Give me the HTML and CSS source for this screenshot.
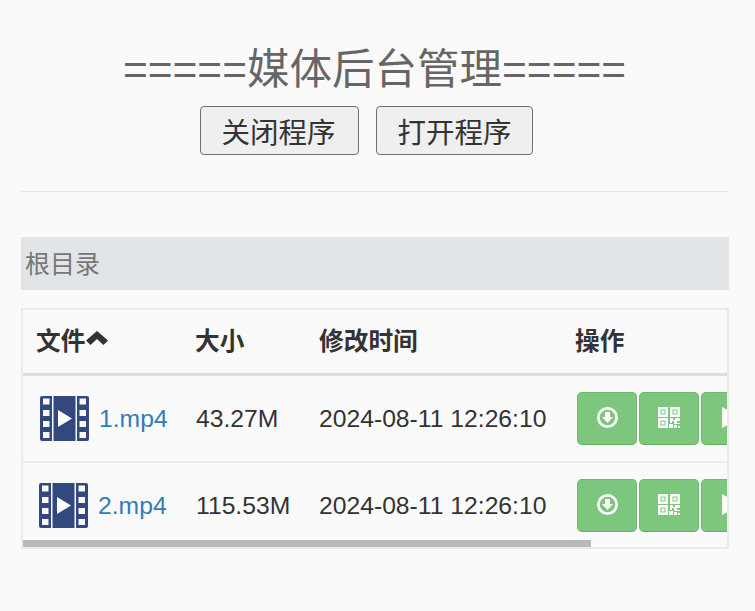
FILE: index.html

```html
<!DOCTYPE html>
<html>
  <head>
    <meta charset="UTF-8">
    <title>媒体后台管理</title>
    <link rel="stylesheet" href="styles.css">
  </head>
  <body>
    <svg class="defs" width="0" height="0">
      <symbol id="film" viewBox="0 0 49 45">
        <path fill="#33487f" fill-rule="evenodd" d="M2 0h10v45H2a2 2 0 0 1-2-2V2a2 2 0 0 1 2-2zM3 2.500v6h6.500v-6zM3 14v6h6.500v-6zM3 25v6h6.500v-6zM3 36v6h6.500v-6zM47 0H37v45h10a2 2 0 0 0 2-2V2a2 2 0 0 0-2-2zM39.500 2.500v6H46v-6zM39.500 14v6H46v-6zM39.500 25v6H46v-6zM39.500 36v6H46v-6z"/>
        <rect x="13.500" width="22" height="45" fill="#33487f"/>
        <path fill="#fff" d="M18 14l14 8.500L18 31z"/>
      </symbol>
      <symbol id="down" viewBox="0 0 21 21">
        <path fill="#fff" fill-rule="evenodd" d="M10.500 0a10.500 10.500 0 1 1 0 21a10.500 10.500 0 0 1 0-21zM10.500 2.700a7.800 7.800 0 1 0 0 15.600a7.800 7.800 0 0 0 0-15.600zM8 5h5v5h3l-5.500 6L5 10h3z"/>
      </symbol>
      <symbol id="qr" viewBox="0 0 22 21">
        <path fill="#fff" fill-rule="evenodd" d="M0 0h10v10H0zM2.500 2.500v5h5v-5zM3.500 3.500h3v3h-3zM12 0h10v10H12zM14.500 2.500v5h5v-5zM15.500 3.500h3v3h-3zM0 11h10v10H0zM2.500 13.500v5h5v-5zM3.500 14.500h3v3h-3zM12 11h3v2h2v-2h5v3h-3v2h3v1h-6v-3h-2v2h-2zM11 17h4v4h-4zM16 18h3v3h-3zM20 19h2v2h-2z"/>
      </symbol>
      <symbol id="play" viewBox="0 0 20 20">
        <path fill="#fff" d="M1 0l18 10L1 20z"/>
      </symbol>
    </svg>

    <main class="wrap">
      <header class="top">
        <h1>=====媒体后台管理=====</h1>
        <div class="top-btns">
          <button class="sys-btn">关闭程序</button>
          <button class="sys-btn">打开程序</button>
        </div>
      </header>
      <hr class="rule">
      <div class="crumb">根目录</div>
      <div class="table-box">
        <div class="table-scroll">
          <table class="files">
            <thead>
              <tr>
                <th class="col-name">文件<svg class="caret" viewBox="0 0 22 14"><path d="M11 0l11 9.500-4.500 4.500L11 8l-6.500 6L0 9.500z"/></svg></th>
                <th class="col-size">大小</th>
                <th class="col-time">修改时间</th>
                <th class="col-ops">操作</th>
              </tr>
            </thead>
            <tbody>
              <tr>
                <td><div class="name-cell"><svg class="film"><use href="#film"/></svg><a href="#">1.mp4</a></div></td>
                <td>43.27M</td>
                <td>2024-08-11 12:26:10</td>
                <td class="ops">
                  <a class="op" href="#"><svg><use href="#down"/></svg></a>
                  <a class="op" href="#"><svg class="qr"><use href="#qr"/></svg></a>
                  <a class="op" href="#"><svg><use href="#play"/></svg></a>
                </td>
              </tr>
              <tr>
                <td><div class="name-cell"><svg class="film"><use href="#film"/></svg><a href="#">2.mp4</a></div></td>
                <td>115.53M</td>
                <td>2024-08-11 12:26:10</td>
                <td class="ops">
                  <a class="op" href="#"><svg><use href="#down"/></svg></a>
                  <a class="op" href="#"><svg class="qr"><use href="#qr"/></svg></a>
                  <a class="op" href="#"><svg><use href="#play"/></svg></a>
                </td>
              </tr>
            </tbody>
          </table>
        </div>
        <div class="scrollbar"><div class="thumb"></div></div>
      </div>
    </main>
  </body>
</html>
```

FILE: styles.css

```css
html, body {
  margin: 0;
  padding: 0;
  height: 100%;
  overflow: hidden;
  background: #fafafa;
  color: #333;
  font-family: "Liberation Sans", "Noto Sans CJK SC", Arial, sans-serif;
}
* {
  box-sizing: border-box;
}
.defs {
  position: absolute;
}
.wrap {
  padding: 42px 26px 0 21px;
}
.top {
  text-align: center;
}
h1 {
  margin: 0;
  padding-right: 1px;
  font-size: 42.500px;
  line-height: 56px;
  font-weight: 400;
  white-space: nowrap;
  color: #666;
}
.top-btns {
  display: flex;
  justify-content: center;
  gap: 17px;
  margin-top: 8px;
  padding-right: 17px;
}
.sys-btn {
  width: 159px;
  height: 49px;
  padding: 0 2px 0 0;
  border: 1px solid #707070;
  border-radius: 4px;
  background: #efefef;
  color: #333;
  font-family: inherit;
  font-size: 28.500px;
}
.sys-btn + .sys-btn {
  width: 157px;
  padding: 0;
}
.rule {
  margin: 36px 0 45px;
  border: 0;
  border-top: 1px solid #e7e7e7;
}
.crumb {
  height: 53px;
  padding: 1px 0 0 4px;
  background: #e2e5e8;
  color: #777;
  font-size: 25px;
  line-height: 52px;
}
.table-box {
  margin-top: 18px;
  height: 241px;
  border: 2px solid #ebebeb;
}
.table-scroll {
  height: 230px;
  overflow: hidden;
}
.scrollbar {
  height: 7px;
}
.thumb {
  width: 568px;
  height: 7px;
  background: #b9b9b9;
}
.files {
  width: 876px;
  table-layout: fixed;
  border-collapse: separate;
  border-spacing: 0;
  font-size: 24.700px;
}
.col-name {
  width: 159px;
}
.col-size {
  width: 123px;
}
.col-time {
  width: 257px;
}
th {
  height: 66px;
  padding: 0 0 6px 13px;
  border-bottom: 3px solid #ddd;
  text-align: left;
  font-weight: 700;
  white-space: nowrap;
}
th.col-time {
  padding-left: 14px;
}
td {
  height: 87px;
  padding: 0 0 0 14px;
  border-bottom: 2px solid #ebebeb;
  white-space: nowrap;
}
.caret {
  width: 22px;
  height: 14px;
  margin-left: 1px;
  vertical-align: 5px;
  fill: #333;
}
.name-cell {
  display: flex;
  align-items: center;
  gap: 10px;
  padding-left: 3px;
}
tbody tr:last-child .name-cell {
  padding-left: 2px;
}
.film {
  width: 49px;
  height: 45px;
  flex-shrink: 0;
}
a {
  color: #337ab7;
  text-decoration: none;
}
td.ops {
  padding-left: 15px;
  font-size: 0;
}
.op {
  display: inline-flex;
  align-items: center;
  justify-content: center;
  width: 60px;
  height: 53px;
  margin-right: 2px;
  padding-bottom: 3px;
  border: 1px solid #6eb96e;
  border-bottom-color: #66b066;
  border-radius: 5px;
  background: #7dc67d;
}
.op svg {
  width: 21px;
  height: 21px;
}
.op svg.qr {
  width: 22px;
}
```
